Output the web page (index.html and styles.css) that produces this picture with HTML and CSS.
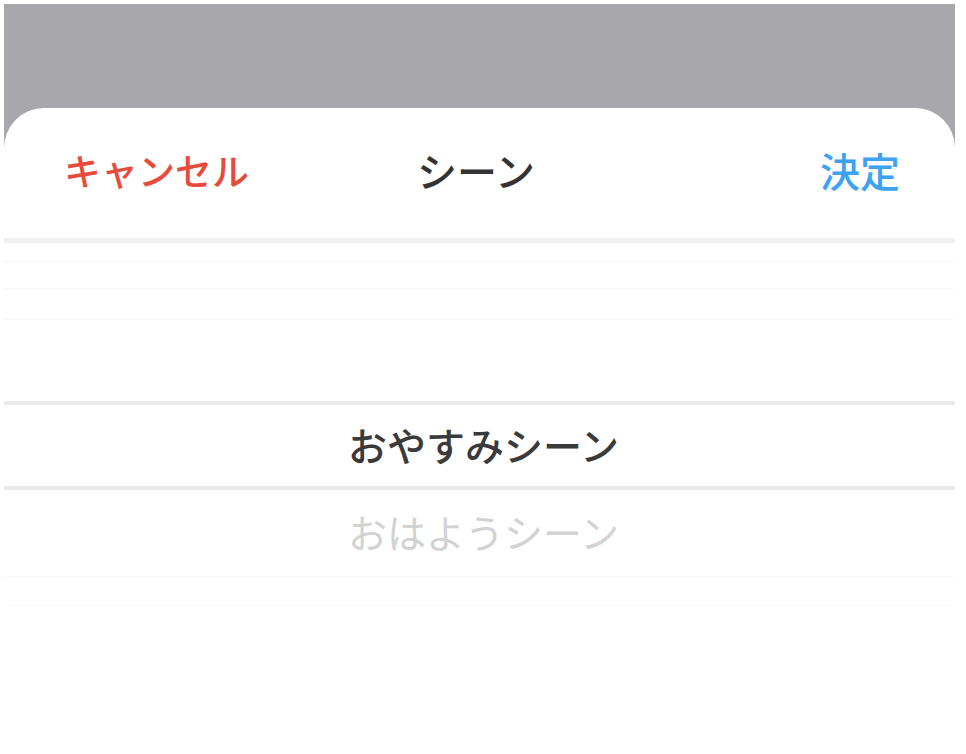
FILE: index.html
```html
<!DOCTYPE html>
<html lang="ja">
<head>
<meta charset="utf-8">
<link rel="stylesheet" href="styles.css">
</head>
<body>
<div class="frame">
  <div class="sheet">
    <div class="header">
      <span class="cancel">キャンセル</span>
      <span class="title">シーン</span>
      <span class="confirm">決定</span>
    </div>
    <div class="divider"></div>
    <div class="picker">
      <div class="above">
        <div class="faint f1"></div>
        <div class="faint f2"></div>
        <div class="faint f3"></div>
      </div>
      <div class="sel-line"></div>
      <div class="row selected">おやすみシーン</div>
      <div class="sel-line"></div>
      <div class="row dim">おはようシーン</div>
      <div class="faint f4"></div>
      <div class="faint f5"></div>
    </div>
  </div>
</div>
</body>
</html>
```

FILE: styles.css
```css
html, body {
  margin: 0;
  padding: 0;
  background: #ffffff;
}
body {
  font-family: "Noto Sans CJK JP", "Noto Sans", sans-serif;
  width: 966px;
  height: 754px;
  overflow: hidden;
}
.frame {
  margin: 4px 11px 0 4px;
  height: 750px;
  background: #a8a7ac;
  padding-top: 104px;
  box-sizing: border-box;
}
.sheet {
  background: #ffffff;
  height: 646px;
  border-radius: 40px 40px 0 0;
  display: flex;
  flex-direction: column;
}
.header {
  height: 130px;
  box-sizing: border-box;
  padding: 0 55px 6px 60px;
  display: grid;
  grid-template-columns: 1fr auto 1fr;
  align-items: center;
}
.cancel {
  color: #e84a3c;
  font-size: 37px;
  font-weight: 500;
}
.title {
  color: #333333;
  font-size: 40px;
  font-weight: 500;
  margin-right: 12px;
}
.confirm {
  color: #3ea2f4;
  font-size: 40px;
  font-weight: 500;
  text-align: right;
}
.divider {
  height: 5px;
  background: #f0f0f0;
}
.picker {
  display: flex;
  flex-direction: column;
}
.above {
  height: 158px;
  display: flex;
  flex-direction: column;
}
.faint {
  height: 2px;
  background: #fafafa;
}
.f1 { margin-top: 18px; }
.f2 { margin-top: 25px; }
.f3 { margin-top: 28px; }
.sel-line {
  height: 4px;
  background: #eaeaea;
}
.row {
  height: 81px;
  display: flex;
  align-items: center;
  justify-content: center;
  font-size: 39px;
  font-weight: 500;
  padding: 0 0 4px 8px;
  box-sizing: border-box;
}
.selected {
  color: #3a3a3a;
}
.dim {
  color: #d2d2d2;
  font-weight: 400;
  height: 86px;
}
.f4 { margin-top: 0; background: #fbfbfb; }
.f5 { margin-top: 26px; background: #fcfcfc; }
```
